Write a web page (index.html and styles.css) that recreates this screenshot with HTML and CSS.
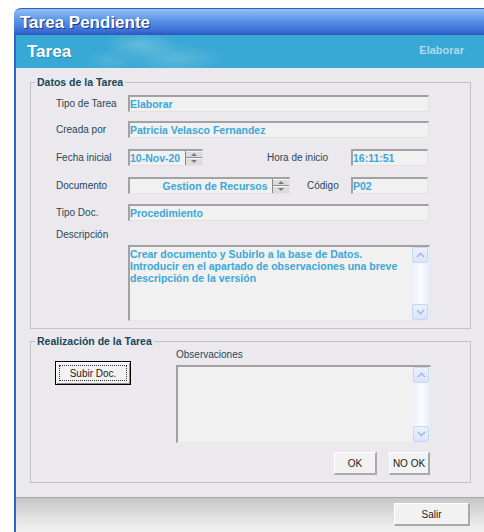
FILE: index.html
```html
<!DOCTYPE html>
<html lang="es">
<head>
<meta charset="utf-8">
<title>Tarea Pendiente</title>
<link rel="stylesheet" href="styles.css">
</head>
<body>
<div class="window">
  <div class="titlebar"><span class="title">Tarea Pendiente</span></div>
  <div class="client">
    <div class="banner">
      <span class="banner-title">Tarea</span>
      <span class="banner-status">Elaborar</span>
    </div>

    <div class="content">
      <fieldset class="group group-datos">
        <legend>Datos de la Tarea</legend>
        <div class="group-body">
          <div class="row r1">
            <span class="lbl">Tipo de Tarea</span>
            <div class="box wide">Elaborar</div>
          </div>
          <div class="row r2">
            <span class="lbl">Creada por</span>
            <div class="box wide">Patricia Velasco Fernandez</div>
          </div>
          <div class="row r3">
            <span class="lbl">Fecha inicial</span>
            <div class="box date">
              <span class="box-text">10-Nov-20</span>
              <span class="spin"><span class="spin-btn"><i class="tri up"></i></span><span class="spin-btn"><i class="tri down"></i></span></span>
            </div>
            <span class="lbl lbl-hora">Hora de inicio</span>
            <div class="box short">16:11:51</div>
          </div>
          <div class="row r4">
            <span class="lbl">Documento</span>
            <div class="box combo">
              <span class="box-text centered">Gestion de Recursos</span>
              <span class="spin"><span class="spin-btn"><i class="tri up"></i></span><span class="spin-btn"><i class="tri down"></i></span></span>
            </div>
            <span class="lbl lbl-codigo">Código</span>
            <div class="box short">P02</div>
          </div>
          <div class="row r5">
            <span class="lbl">Tipo Doc.</span>
            <div class="box wide">Procedimiento</div>
          </div>
          <div class="row r6">
            <span class="lbl">Descripción</span>
          </div>
          <div class="memo memo-desc">
            <div class="memo-text">Crear documento y Subirlo a la base de Datos. Introducir en el apartado de observaciones una breve descripción de la versión</div>
            <div class="vscroll">
              <span class="arrow"><svg width="9" height="6" viewBox="0 0 9 6"><path d="M1 5 L4.5 1.5 L8 5" fill="none" stroke="#a7b9dd" stroke-width="1.6"/></svg></span>
              <span class="arrow"><svg width="9" height="6" viewBox="0 0 9 6"><path d="M1 1 L4.5 4.5 L8 1" fill="none" stroke="#a7b9dd" stroke-width="1.6"/></svg></span>
            </div>
          </div>
        </div>
      </fieldset>

      <fieldset class="group group-real">
        <legend>Realización de la Tarea</legend>
        <div class="real-body">
          <div class="real-left">
            <button class="btn btn-default"><span class="focus">Subir Doc.</span></button>
          </div>
          <div class="real-right">
            <span class="lbl obs-lbl">Observaciones</span>
            <div class="memo memo-obs">
              <div class="memo-text"></div>
              <div class="vscroll">
                <span class="arrow"><svg width="9" height="6" viewBox="0 0 9 6"><path d="M1 5 L4.5 1.5 L8 5" fill="none" stroke="#a7b9dd" stroke-width="1.6"/></svg></span>
                <span class="arrow"><svg width="9" height="6" viewBox="0 0 9 6"><path d="M1 1 L4.5 4.5 L8 1" fill="none" stroke="#a7b9dd" stroke-width="1.6"/></svg></span>
              </div>
            </div>
            <div class="actions">
              <button class="btn btn-ok">OK</button>
              <button class="btn btn-nook">NO OK</button>
            </div>
          </div>
        </div>
      </fieldset>
    </div>

    <div class="footer">
      <button class="btn btn-salir">Salir</button>
    </div>
  </div>
</div>
</body>
</html>
```

FILE: styles.css
```css
* { box-sizing: border-box; }

html, body {
  margin: 0;
  background: #ffffff;
  overflow: hidden;
}

body {
  width: 484px;
  height: 532px;
  font-family: "Liberation Sans", Arial, sans-serif;
}

/* ---- window frame ---- */
.window {
  margin: 8px 0 0 14px;
  width: 490px;
}

.titlebar {
  height: 27px;
  border-radius: 7px 0 0 0;
  border-top: 1px solid #2f5fc6;
  background: linear-gradient(#93c1f3 0%, #74aaee 22%, #5a93e6 45%, #4a80de 65%, #3a6dd2 85%, #2c58bf 100%);
  display: flex;
  align-items: center;
  padding-left: 6px;
}

.title {
  color: #ffffff;
  font-weight: bold;
  font-size: 17px;
  text-shadow: 1px 1px 0 #17358a;
  margin-top: 2px;
}

.client {
  border-left: 2px solid #3263c8;
  background: #ebe9ed;
}

/* ---- banner ---- */
.banner {
  height: 33px;
  display: flex;
  align-items: center;
  justify-content: space-between;
  padding: 0 40px 0 11px;
  background:
    radial-gradient(ellipse 38px 14px at 125px 10px, rgba(255,255,255,0.22), rgba(255,255,255,0) 100%),
    radial-gradient(ellipse 50px 16px at 160px 24px, rgba(255,255,255,0.18), rgba(255,255,255,0) 100%),
    radial-gradient(ellipse 30px 12px at 95px 26px, rgba(255,255,255,0.12), rgba(255,255,255,0) 100%),
    #38a8d5;
}

.banner-title {
  color: #ffffff;
  font-weight: bold;
  font-size: 17px;
  text-shadow: 1px 1px 0 rgba(20, 80, 120, 0.35);
}

.banner-status {
  color: #b3d9ec;
  font-weight: bold;
  font-size: 11px;
  margin-top: -3px;
}

/* ---- content ---- */
.content {
  height: 429px;
  padding-top: 8px;
}

.group {
  margin: 0 0 0 14px;
  padding: 0;
  width: 441px;
  border: 1px solid #c3c1c6;
  min-width: 0;
}

.group legend {
  margin-left: 4px;
  padding: 0 2px;
  font-weight: bold;
  font-size: 10.5px;
  line-height: 12px;
  color: #17475c;
}

.group-body {
  padding: 7px 0 7px 25px;
}

.row {
  display: flex;
  align-items: center;
  height: 17px;
}

.r2 { margin-top: 9px; }
.r3 { margin-top: 11px; }
.r4 { margin-top: 11px; }
.r5 { margin-top: 10px; }
.r6 { margin-top: 6px; height: 14px; }

.lbl {
  width: 72px;
  flex: none;
  font-size: 10px;
  color: #29475b;
  white-space: nowrap;
}

.lbl-hora { margin-left: 64px; width: 84px; }
.lbl-codigo { margin-left: 17px; width: 44px; }

.box {
  height: 17px;
  flex: none;
  display: flex;
  align-items: center;
  background: #f1f1f1;
  border-style: solid;
  border-width: 2px 1px 1px 2px;
  border-color: #a2a2a2 #e2e2e2 #e2e2e2 #a2a2a2;
  font-weight: bold;
  font-size: 10.5px;
  color: #3aa8d8;
  white-space: nowrap;
  overflow: hidden;
}

.wide { width: 301px; }
.short { width: 77px; }
.date { width: 75px; }
.combo { width: 162px; }

.box-text { flex: 1; }
.box-text.centered { text-align: center; padding-left: 28px; }

/* spinner on the date and combo boxes */
.spin {
  width: 17px;
  height: 15px;
  display: flex;
  flex-direction: column;
  flex: none;
  border-left: 1px solid #8a8a8a;
}

.spin-btn {
  flex: 1;
  display: flex;
  align-items: center;
  justify-content: center;
  background: #dcdcdc;
  border-top: 1px solid #f6f6f6;
  border-bottom: 1px solid #8f8f8f;
}

.tri {
  width: 0;
  height: 0;
  border-left: 3px solid transparent;
  border-right: 3px solid transparent;
}
.tri.up { border-bottom: 3px solid #7b7b7b; }
.tri.down { border-top: 3px solid #7b7b7b; }

/* ---- multi-line boxes ---- */
.memo {
  display: flex;
  background: #f1f1f1;
  border-style: solid;
  border-width: 2px 1px 1px 2px;
  border-color: #a2a2a2 #e8e8e8 #e8e8e8 #a2a2a2;
}

.memo-desc {
  margin: 4px 0 0 72px;
  width: 302px;
  height: 76px;
}

.memo-text {
  flex: 1;
  padding: 1px 0 0 0;
  font-weight: bold;
  font-size: 10.5px;
  line-height: 12px;
  color: #3aa8d8;
}

.vscroll {
  width: 17px;
  flex: none;
  display: flex;
  flex-direction: column;
  justify-content: space-between;
  background: linear-gradient(90deg, #e9f0fd 0%, #fbfcff 55%, #e6edfb 100%);
  padding: 0 1px 0 0;
}

.arrow {
  height: 16px;
  display: flex;
  align-items: center;
  justify-content: center;
  background: linear-gradient(#eaf1fe, #d9e5fb);
  border: 1px solid #c8d6f3;
  border-radius: 2px;
}

/* ---- second group ---- */
.group-real { margin-top: 6px; }

.real-body {
  display: flex;
  padding: 0 0 7px 24px;
}

.real-left {
  width: 121px;
  flex: none;
  padding-top: 14px;
}

.real-right {
  width: 256px;
  flex: none;
  display: flex;
  flex-direction: column;
}

.obs-lbl {
  margin-top: 2px;
  height: 12px;
  line-height: 12px;
}

.memo-obs {
  margin-top: 4px;
  width: 255px;
  height: 78px;
}

.actions {
  margin-top: 9px;
  display: flex;
  justify-content: flex-end;
  gap: 12px;
  padding-right: 2px;
}

/* ---- buttons ---- */
.btn {
  font-family: "Liberation Sans", Arial, sans-serif;
  font-size: 10px;
  color: #1a1a1a;
  background: #f2f2f2;
  border-style: solid;
  border-width: 1px 2px 2px 1px;
  border-color: #ffffff #a9a9a9 #a9a9a9 #ffffff;
  padding: 0;
  height: 23px;
  display: inline-flex;
  align-items: center;
  justify-content: center;
}

.btn-ok { width: 43px; }
.btn-nook { width: 41px; }

.btn-default {
  width: 76px;
  height: 24px;
  border: 1px solid #000000;
  box-shadow: inset 1px 1px 0 #ffffff, inset -1px -1px 0 #8c8c8c;
  padding: 3px;
}

.focus {
  display: flex;
  align-items: center;
  justify-content: center;
  width: 100%;
  height: 100%;
  border: 1px dotted #333333;
}

/* ---- footer ---- */
.footer {
  height: 40px;
  border-top: 1px solid #a8a8a8;
  background: linear-gradient(#c6c6c6 0%, #dadada 35%, #eeeeee 75%, #f4f4f4 100%);
  padding: 5px 0 0 378px;
}

.btn-salir { width: 76px; }
```
